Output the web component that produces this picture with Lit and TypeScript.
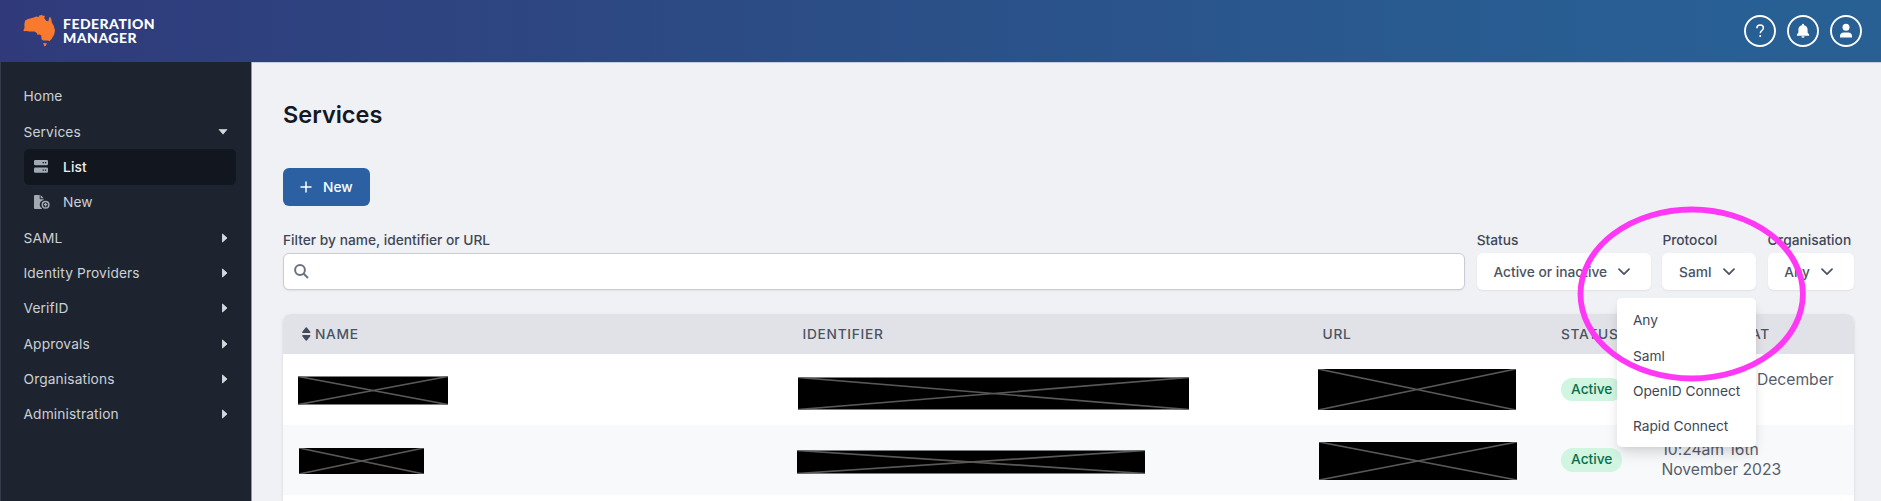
import { LitElement, html, css } from "lit";
import { customElement, property } from "lit/decorators.js";

@customElement("redacted-box")
class RedactedBox extends LitElement {
  @property({ type: Number }) w = 100;
  @property({ type: Number }) h = 24;
  static styles = css`
    :host { display: block; }
    svg { display: block; background: #000; }
  `;
  render() {
    const { w, h } = this;
    return html`<svg width=${w} height=${h} viewBox="0 0 ${w} ${h}">
      <path d="M0 0L${w} ${h}M0 ${h}L${w} 0" stroke="#585858" stroke-width="1.7" fill="none" />
    </svg>`;
  }
}

const chevron = html`<svg class="chev" width="12" height="8" viewBox="0 0 12 8"><path d="M1 1.2L6 6.2L11 1.2" fill="none" stroke="#4b5362" stroke-width="1.7" stroke-linecap="round" stroke-linejoin="round"/></svg>`;

const listIcon = html`<svg width="14" height="13" viewBox="0 0 14 13"><path fill="#a3a9b3" fill-rule="evenodd" d="M1.3 0h11.4a1.3 1.3 0 0 1 1.3 1.3v2.7a1.3 1.3 0 0 1-1.3 1.3H1.3A1.3 1.3 0 0 1 0 4V1.3A1.3 1.3 0 0 1 1.3 0zM8.6 2v1.3h1.3V2zm2.3 0v1.3h1.3V2zM1.3 7.4h11.4A1.3 1.3 0 0 1 14 8.7v2.7a1.3 1.3 0 0 1-1.3 1.3H1.3A1.3 1.3 0 0 1 0 11.4V8.7a1.3 1.3 0 0 1 1.3-1.3zM8.6 9.4v1.3h1.3V9.4zm2.3 0v1.3h1.3V9.4z"/></svg>`;

const newIcon = html`<svg width="16" height="14" viewBox="0 0 16 14"><path fill="#a3a9b3" d="M1 0h4.7v3.5a.8.8 0 0 0 .8.8H9.7v.6a4.6 4.6 0 0 0-1.7 8.5c-.2.4-.5.6-.9.6H1a1 1 0 0 1-1-1V1a1 1 0 0 1 1-1zM6.6 0L9.7 3.3H6.6z"/><circle cx="11.6" cy="9.7" r="3.3" fill="none" stroke="#a3a9b3" stroke-width="1.5"/><path d="M11.6 8v3.4M9.9 9.7h3.4" stroke="#a3a9b3" stroke-width="1.3"/></svg>`;

interface Redaction { w: number; h: number; dx: number; dy: number; }
interface Row { boxes: Redaction[]; date: string[]; }

const rows: Row[] = [
  {
    boxes: [
      { w: 150, h: 28, dx: 0, dy: 0.5 },
      { w: 391, h: 32, dx: 0, dy: 3.5 },
      { w: 198, h: 41, dx: 0, dy: 0 },
    ],
    date: ["12:21pm 11th December", "2023"],
  },
  {
    boxes: [
      { w: 125, h: 26, dx: 1, dy: 1 },
      { w: 348, h: 23, dx: -1, dy: 1.5 },
      { w: 198, h: 38, dx: 1, dy: 1 },
    ],
    date: ["10:24am 16th", "November 2023"],
  },
];

@customElement("app-root")
class AppRoot extends LitElement {
  static styles = css`
    * { box-sizing: border-box; }
    :host {
      display: flex; flex-direction: column; position: relative;
      width: 1881px; height: 501px; overflow: hidden;
      font-family: Inter, "Liberation Sans", sans-serif;
      font-size: 13.75px; color: #3f4756; background: #f0f1f5;
    }
    header {
      height: 62px; flex: none; display: flex; align-items: center; justify-content: space-between;
      padding: 0 19px 0 23px;
      background: linear-gradient(90deg, #303a7b, #2b5088 50%, #285e93 85%, #286094);
    }
    .brand { display: flex; align-items: center; }
    .brand svg { display: block; }
    .word { margin-left: 7px; color: #fff; font: 900 14px/14px Lato, sans-serif; letter-spacing: .47px; }
    .word div { white-space: nowrap; height: 14px; }
    .actions { display: flex; gap: 11px; }
    .actions svg { display: block; }
    .body { flex: 1; display: flex; min-height: 0; border-top: 1px solid #c5cde0; }
    nav {
      width: 252px; flex: none; background: #1e242f; border-left: 1px solid #343a48; border-right: 1px solid #9095a0;
      margin-top: -1px; padding: 16.5px 15px 0 22.5px;
    }
    .item {
      height: 35.35px; display: flex; align-items: center; color: #cbd0d6; letter-spacing: .12px;
      justify-content: space-between; padding-right: 7.7px;
    }
    .item.sub { justify-content: flex-start; border-radius: 5px; padding-left: 10px; }
    .item.sub .ic { width: 29.5px; display: flex; }
    .item.active { background: #12161f; color: #eceef0; font-weight: 500; }
    main { flex: 1; padding: 36px 27px 0 31px; display: flex; flex-direction: column; }
    h1 { margin: 0; font-size: 23.5px; line-height: 32px; font-weight: 600; color: #131924; }
    .btn {
      margin-top: 37px; width: 86.5px; height: 38px; border-radius: 6px; background: #2b61a2; color: #fff;
      display: flex; align-items: center; padding-left: 17px; gap: 11px; font-weight: 500;
    }
    .filters { display: flex; gap: 11.7px; margin-top: 24px; }
    .field { display: flex; flex-direction: column; position: relative; white-space: nowrap; }
    .field.grow { width: 1182px; }
    label { font-weight: 500; line-height: 20px; height: 23px; }
    .input {
      height: 37px; background: #fff; border: 1px solid #c9ccd4; border-radius: 6px; box-shadow: 0 1px 2px #0001;
      display: flex; align-items: center; padding-left: 10px;
    }
    .select {
      height: 37px; background: #fff; border-radius: 6px; box-shadow: 0 1px 2px #0001;
      display: flex; align-items: center; justify-content: space-between; padding: 0 20.5px 0 16.7px; font-weight: 500; color: #4b5362;
    }
    .menu {
      position: absolute; z-index: 2; right: 0; top: 68px; width: 139px; height: 149px; background: #fff; border-radius: 5px;
      padding: 4.5px 16px; box-shadow: 0 8px 14px -2px #0002, 0 3px 6px -2px #0001;
    }
    .menu div { height: 35.35px; display: flex; align-items: center; }
    .table { margin-top: 24px; border-radius: 8px 8px 0 0; background: #fff; box-shadow: 0 1px 3px #0002; flex: 1; min-height: 0; overflow: hidden; }
    .tr { display: grid; grid-template-columns: 504px 520px 238.5px 100.5px 208px; height: 71px; }
    .tr > div { padding: 0 15.5px; display: flex; align-items: center; white-space: nowrap; }
    .tr.even { background: #f7f9fb; height: 70px; }
    .tr.head { height: 40px; background: #e1e2e8; font-weight: 500; letter-spacing: .7px; color: #4b5362; }
    .tight { letter-spacing: .1px; margin-right: 4px; }
    .box { margin-left: -.5px; }
    .pill { background: #d0f5e0; color: #06704c; font-weight: 500; height: 23.5px; line-height: 23.5px; padding: 0 10px; border-radius: 12px; }
    .date { font-size: 15.7px; line-height: 19.7px; color: #565d6b; letter-spacing: -.04px; }
    .ring { position: absolute; left: 1577px; top: 206px; z-index: 3; pointer-events: none; }
  `;

  nav(label: string, open = false) {
    return html`<div class="item"><span>${label}</span>${open
      ? html`<svg width="10" height="6" viewBox="0 0 10 6"><path d="M1 .4h8L5 5.2z" fill="#d5d9dd" stroke="#d5d9dd" stroke-width=".7" stroke-linejoin="round"/></svg>`
      : html`<svg width="7" height="10" viewBox="0 0 7 10"><path d="M1.5 1v8L6 5z" fill="#d5d9dd" stroke="#d5d9dd" stroke-width=".9" stroke-linejoin="round"/></svg>`}</div>`;
  }

  render() {
    return html`
      <header>
        <div class="brand">
          <svg width="33" height="34" viewBox="0 0 33 34"><g fill="#f97a2f">
            <path d="M2.1 6.4L5 5L10 3.8L13.200 2.600L15.500 3L16.400 1.500L18.500 1.100L20.200 1.800L22 1.700L21.200 4.300L23.600 6.900L25.400 7.300L26.300 3.300L27.300 3.200L28.300 5L28.800 8.600L30.800 12L32 16.600L31.200 20.600L28.600 25L26.600 27L24.400 26.400L20.200 26.600L18.500 25.300L18.200 21.600L16.600 20.600L14.500 20.700L13.800 19L11.500 17.400L6.500 17.500L3.500 16.900L.8 17.200L.5 16L1.500 14L1.400 10Z"/>
            <path d="M20.200 29L23.900 29.200L22.800 31.800L21.500 32.500Z"/></g></svg>
          <div class="word"><div>FEDERATION</div><div>MANAGER</div></div>
        </div>
        <div class="actions">
          <svg width="32" height="32" viewBox="0 0 32 32"><circle cx="16" cy="16" r="15" fill="none" stroke="#fff" stroke-width="1.9"/><path d="M12.9 13.2c0-1.900 1.400-3.100 3.300-3.100s3.200 1.200 3.200 2.900c0 2.600-3.100 2.500-3.100 5.200" fill="none" stroke="#fff" stroke-width="1.5"/><circle cx="16.2" cy="21" r="1" fill="#fff"/></svg>
          <svg width="32" height="32" viewBox="0 0 32 32"><circle cx="16" cy="16" r="15" fill="none" stroke="#fff" stroke-width="1.9"/><path fill="#fff" d="M16 8.800a1 1 0 0 1 1 1v.5c2.200.4 3.600 2 3.600 4.200v3l1.500 2v1.200H9.900v-1.200l1.500-2v-3c0-2.200 1.400-3.800 3.600-4.200v-.5a1 1 0 0 1 1-1zM14.400 21.200h3.200a1.600 1.600 0 0 1-3.200 0z"/></svg>
          <svg width="32" height="32" viewBox="0 0 32 32"><circle cx="16" cy="16" r="15" fill="none" stroke="#fff" stroke-width="1.9"/><circle cx="16" cy="12.2" r="3.5" fill="#fff"/><path fill="#fff" d="M10 22.600v-1.700c0-2.200 1.600-3.500 3.800-3.500h4.400c2.200 0 3.800 1.300 3.800 3.500v1.700z"/></svg>
        </div>
      </header>
      <div class="body">
        <nav>
          <div class="item">Home</div>
          ${this.nav("Services", true)}
          <div class="item sub active"><span class="ic">${listIcon}</span>List</div>
          <div class="item sub"><span class="ic">${newIcon}</span>New</div>
          ${["SAML", "Identity Providers", "VerifID", "Approvals", "Organisations", "Administration"].map((l) => this.nav(l))}
        </nav>
        <main>
          <h1>Services</h1>
          <div class="btn"><svg width="12" height="12" viewBox="0 0 12 12"><path d="M6 .5v11M.5 6h11" stroke="#fff" stroke-width="1.5"/></svg>New</div>
          <div class="filters">
            <div class="field grow"><label>Filter by name, identifier or URL</label>
              <div class="input"><svg width="15" height="15" viewBox="0 0 15 15" fill="none" stroke="#6a7280" stroke-width="2"><circle cx="6" cy="6" r="4.9"/><path d="M9.500 9.500L14 14"/></svg></div></div>
            <div class="field" style="width:174px"><label>Status</label><div class="select">Active or inactive${chevron}</div></div>
            <div class="field" style="width:93.5px"><label>Protocol</label><div class="select">Saml${chevron}</div>
              <div class="menu">${["Any", "Saml", "OpenID Connect", "Rapid Connect"].map((t) => html`<div>${t}</div>`)}</div></div>
            <div class="field" style="width:86px"><label>Organisation</label><div class="select">Any${chevron}</div></div>
          </div>
          <div class="table">
            <div class="tr head">
              <div><svg width="16.5" height="14" viewBox="0 0 16.5 14"><path d="M7.300 1L10.700 5.200H3.900zM7.300 13L10.700 8.800H3.900z" fill="#434c5b" stroke="#434c5b" stroke-width="1.500" stroke-linejoin="round"/></svg>NAME</div>
              <div>IDENTIFIER</div><div>URL</div><div>STATUS</div><div><span class="tight">REGISTERED</span>AT</div>
            </div>
            ${rows.map((r, i) => html`<div class="tr ${i % 2 ? "even" : ""}">
              ${r.boxes.map((b, c) => html`<div><redacted-box class="box" .w=${b.w} .h=${b.h}
                style="transform:translate(${b.dx - (c ? 4 : 0)}px,${b.dy}px)"></redacted-box></div>`)}
              <div><span class="pill">Active</span></div>
              <div><div class="date">${r.date[0]}<br />${r.date[1]}</div></div>
            </div>`)}
          </div>
        </main>
      </div>
      <svg class="ring" width="230" height="176" viewBox="0 0 230 176"><ellipse cx="114.700" cy="88" rx="111.200" ry="84.500" fill="none" stroke="#ff38f5" stroke-width="5.800"/></svg>
    `;
  }
}
